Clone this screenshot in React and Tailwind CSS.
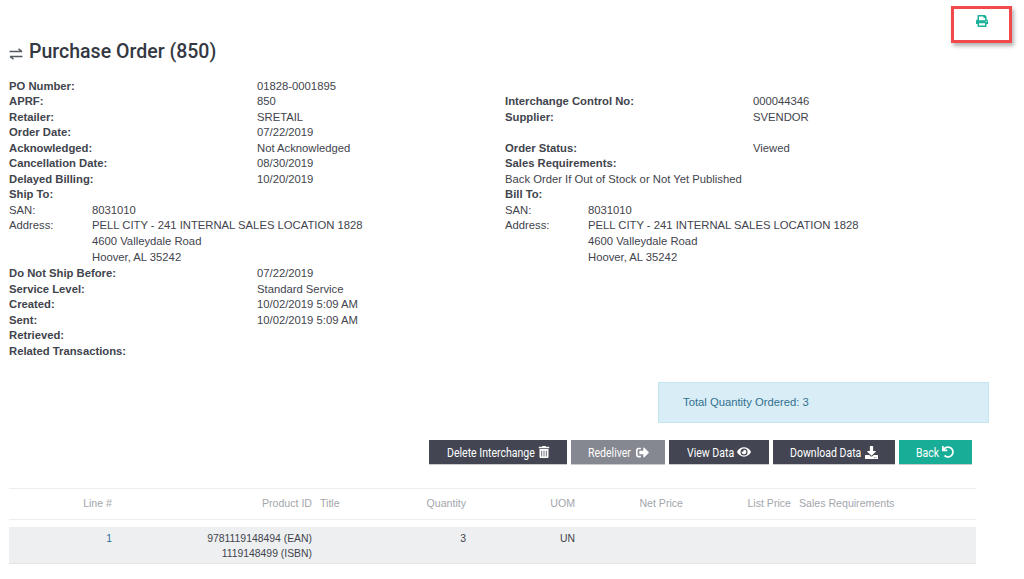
import React from "react";
import { FaPrint, FaTrashAlt, FaSignOutAlt, FaEye, FaDownload, FaUndo } from "react-icons/fa";

const leftTop = [
  ["PO Number:", "01828-0001895"],
  ["APRF:", "850"],
  ["Retailer:", "SRETAIL"],
  ["Order Date:", "07/22/2019"],
  ["Acknowledged:", "Not Acknowledged"],
  ["Cancellation Date:", "08/30/2019"],
  ["Delayed Billing:", "10/20/2019"],
];

const leftBottom = [
  ["Do Not Ship Before:", "07/22/2019"],
  ["Service Level:", "Standard Service"],
  ["Created:", "10/02/2019 5:09 AM"],
  ["Sent:", "10/02/2019 5:09 AM"],
  ["Retrieved:", ""],
  ["Related Transactions:", ""],
];

const Row = ({ label, value }) => (
  <div className="grid grid-cols-[248px_1fr] h-[15.45px] leading-[15.45px]">
    <span className="font-bold">{label}</span>
    <span>{value}</span>
  </div>
);

const Address = () => (
  <div className="grid grid-cols-[83px_1fr]">
    <span className="h-[15.45px] leading-[15.45px]">SAN:</span>
    <span className="h-[15.45px] leading-[15.45px]">8031010</span>
    <span className="-mt-[0.6px] leading-[16px]">Address:</span>
    <div className="-mt-[0.6px]">
      <p className="leading-[16px]">PELL CITY - 241 INTERNAL SALES LOCATION 1828</p>
      <p className="leading-[16px]">4600 Valleydale Road</p>
      <p className="leading-[17px]">Hoover, AL 35242</p>
    </div>
  </div>
);

const Btn = ({ children, icon, className, textClass }) => (
  <button className={`h-[25px] flex items-center text-white border-b border-[#c9ccd1] ${className}`}>
    <span className={`inline-block -mt-px whitespace-nowrap origin-left scale-x-[0.78] text-left text-[13.5px] font-['Roboto',sans-serif] ${textClass}`}>
      {children}
    </span>
    {icon}
  </button>
);

export default function App() {
  return (
    <div className="relative h-[579px] w-full overflow-hidden bg-white font-['Liberation_Sans',Arial,sans-serif] text-[11.28px] text-[#3f444d]">
      {/* print action with the red highlight */}
      <div className="absolute left-[951px] top-[6px] w-[61px] h-[37px] border-[3px] border-[#f04a4c] shadow-[2px_3px_4px_rgba(0,0,0,0.3)] flex justify-center pt-[6px]">
        <FaPrint className="text-[#1bb09a] text-[12px]" />
      </div>

      <div className="pl-[9px] pt-[40px]">
        <h1 className="flex items-center gap-[6px] h-[24px] font-['Roboto',sans-serif] font-medium text-[21px] text-[#333842]">
          <svg width="14" height="12" viewBox="0 0 14 12" className="mt-[4px] text-[#555a62]" fill="none" stroke="currentColor" strokeWidth="1.5">
            <path d="M0.5 3.5H13M9.5 0.8L13 3.5" />
            <path d="M13.5 8.5H1M4.5 11.2L1 8.5" />
          </svg>
          <span className="inline-block whitespace-nowrap origin-left scale-x-[0.93]">Purchase Order (850)</span>
        </h1>

        <div className="grid grid-cols-[496px_496px] mt-[15px]">
          <div>
            {leftTop.map(([l, v]) => (
              <Row key={l} label={l} value={v} />
            ))}
            <div className="font-bold h-[15.45px] leading-[15.45px]">Ship To:</div>
            <Address />
            {leftBottom.map(([l, v]) => (
              <Row key={l} label={l} value={v} />
            ))}
          </div>
          <div>
            <div className="h-[15.45px]" />
            <Row label="Interchange Control No:" value="000044346" />
            <Row label="Supplier:" value="SVENDOR" />
            <div className="h-[15.45px]" />
            <Row label="Order Status:" value="Viewed" />
            <div className="font-bold h-[15.45px] leading-[15.45px]">Sales Requirements:</div>
            <div className="h-[15.45px] leading-[15.45px]">Back Order If Out of Stock or Not Yet Published</div>
            <div className="font-bold h-[15.45px] leading-[15.45px]">Bill To:</div>
            <Address />
          </div>
        </div>
      </div>

      <div className="ml-[658px] mt-[23.2px] w-[331px] h-[41px] bg-[#d9edf7] border border-[#c4e6f0] pl-[24px] flex items-center text-[#31708f]">
        Total Quantity Ordered: 3
      </div>

      <div className="flex justify-end gap-[4px] mt-[17px] pr-[52px]">
        <Btn
          className="w-[138px] pl-[18px] bg-[#434652]"
          textClass="w-[91px]"
          icon={<FaTrashAlt className="text-[12px]" />}
        >
          Delete Interchange
        </Btn>
        <Btn
          className="w-[94px] pl-[17px] bg-[#858890]"
          textClass="w-[48px]"
          icon={<FaSignOutAlt className="text-[13px]" />}
        >
          Redeliver
        </Btn>
        <Btn
          className="w-[100px] pl-[18px] bg-[#434652]"
          textClass="w-[50px]"
          icon={<FaEye className="text-[14px]" />}
        >
          View Data
        </Btn>
        <Btn
          className="w-[122px] pl-[17px] bg-[#434652]"
          textClass="w-[75px]"
          icon={<FaDownload className="text-[13px]" />}
        >
          Download Data
        </Btn>
        <Btn
          className="w-[73px] pl-[17px] bg-[#17ad96]"
          textClass="w-[26px]"
          icon={<FaUndo className="text-[12px]" />}
        >
          Back
        </Btn>
      </div>

      <div className="ml-[9px] w-[967px] mt-[23px] text-[10.6px]">
        <div className="grid grid-cols-[107px_200px_62px_92px_109px_108px_108px_181px] h-[32px] items-center border-y border-[#eceeef] text-[#a3a6ab]">
          <span className="text-right pr-[4px]">Line #</span>
          <span className="text-right pr-[4px]">Product ID</span>
          <span className="pl-[4px]">Title</span>
          <span className="text-right pr-[4px]">Quantity</span>
          <span className="text-right pr-[4px]">UOM</span>
          <span className="text-right pr-[4px]">Net Price</span>
          <span className="text-right pr-[4px]">List Price</span>
          <span className="pl-[4px]">Sales Requirements</span>
        </div>
        <div className="grid grid-cols-[107px_200px_62px_92px_109px_108px_108px_181px] h-[37px] mt-[7px] pt-[4px] bg-[#eeeff1] border-b border-[#e2e4e6] text-[#3f444d] text-[10.4px] leading-[15px]">
          <span className="text-right pr-[4px] text-[#2a6f97]">1</span>
          <span className="text-right pr-[4px]">
            9781119148494 (EAN)
            <br />
            1119148499 (ISBN)
          </span>
          <span />
          <span className="text-right pr-[4px]">3</span>
          <span className="text-right pr-[4px]">UN</span>
          <span />
          <span />
          <span />
        </div>
      </div>
    </div>
  );
}
